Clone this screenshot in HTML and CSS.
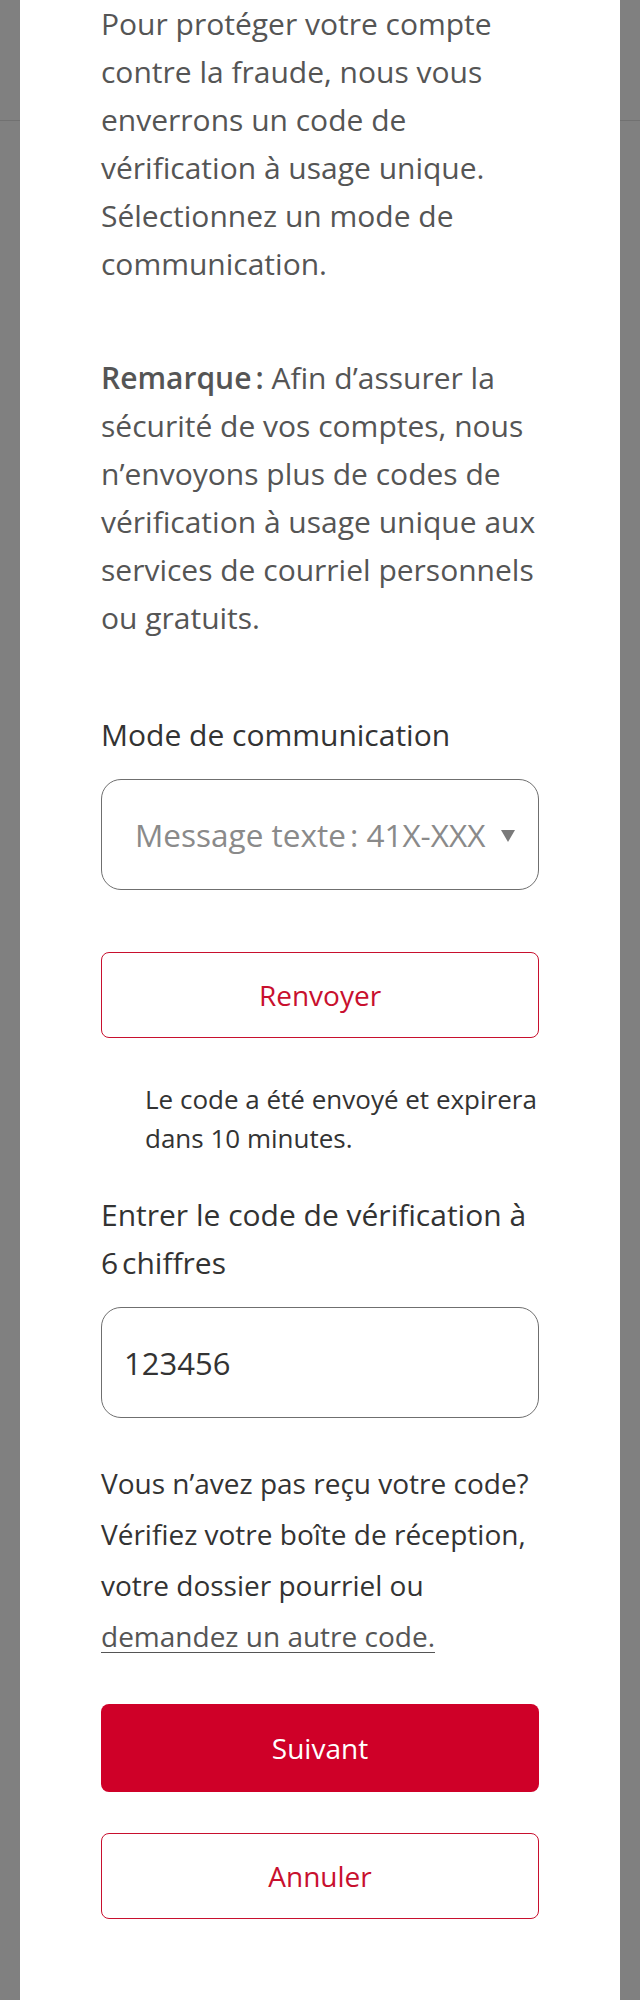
FILE: index.html
```html
<!DOCTYPE html>
<html lang="fr">
<head>
<meta charset="utf-8">
<title>Vérification</title>
<link rel="stylesheet" href="styles.css">
</head>
<body>
<main class="panel">
  <p class="intro">Pour protéger votre compte contre la fraude, nous vous enverrons un code de vérification à usage unique. Sélectionnez un mode de communication.</p>
  <p class="intro note"><strong class="note-title">Remarque<span class="colon">:</span></strong> Afin d’assurer la sécurité de vos comptes, nous n’envoyons plus de codes de vérification à usage unique aux services de courriel personnels ou gratuits.</p>
  <div class="field-label label-mode">Mode de communication</div>
  <div class="select">
    <span class="select-value">Message texte&#8239;: 41X-XXX-XXXX</span>
    <svg class="select-arrow" width="14" height="12" viewBox="0 0 14 12" aria-hidden="true"><path d="M0 0 H14 L7 12 Z" fill="#7a7a7a"/></svg>
  </div>
  <button class="btn btn-outline btn-resend" type="button">Renvoyer</button>
  <p class="sent">Le code a été envoyé et expirera dans 10 minutes.</p>
  <div class="field-label label-code">Entrer le code de vérification à 6&#8239;chiffres</div>
  <div class="input">123456</div>
  <p class="help">Vous n’avez pas reçu votre code?<br>Vérifiez votre boîte de réception,<br>votre dossier pourriel ou<br><a class="link" href="#">demandez un autre code.</a></p>
  <button class="btn btn-primary" type="button">Suivant</button>
  <button class="btn btn-outline btn-cancel" type="button">Annuler</button>
</main>
</body>
</html>
```
FILE: styles.css
```css
html, body {
  margin: 0;
  padding: 0;
}
body {
  background-color: #808080;
  background-image: linear-gradient(to bottom, transparent 120px, #717171 120px, #717171 121px, transparent 121px);
  font-family: "Open Sans", "DejaVu Sans", sans-serif;
}
.panel {
  box-sizing: border-box;
  width: 600px;
  min-height: 2000px;
  margin: 0 20px;
  padding: 0 81px;
  background: #ffffff;
  display: flex;
  flex-direction: column;
}
.intro {
  margin: 0;
  font-size: 30px;
  line-height: 48px;
  color: #555555;
}
.note {
  margin-top: 66px;
}
.note-title {
  font-weight: 600;
}
.colon {
  margin-left: 4px;
}
.field-label {
  font-size: 30px;
  line-height: 48px;
  color: #333333;
}
.label-mode {
  margin-top: 69px;
}
.label-code {
  margin-top: 33px;
}
.select, .input {
  box-sizing: border-box;
  height: 111px;
  margin-top: 20px;
  border: 1px solid #6f6f6f;
  border-radius: 20px;
  display: flex;
  align-items: center;
}
.select {
  padding: 0 23px 0 33px;
}
.select-value {
  flex: 1;
  min-width: 0;
  overflow: hidden;
  white-space: nowrap;
  font-size: 31.5px;
  color: #8a8a8a;
  margin-right: 15px;
}
.select-arrow {
  flex: none;
  margin-top: 3px;
}
.input {
  padding: 0 22px;
  font-size: 31px;
  color: #333333;
}
.btn {
  box-sizing: border-box;
  width: 100%;
  margin: 0;
  padding: 0;
  font-family: "Open Sans", "DejaVu Sans", sans-serif;
  font-size: 28px;
  border-radius: 8px;
  cursor: pointer;
}
.btn-outline {
  height: 86px;
  background: #ffffff;
  border: 1px solid #c8102e;
  color: #c8102e;
}
.btn-resend {
  margin-top: 62px;
}
.btn-primary {
  height: 88px;
  margin-top: 42px;
  background: #cf0028;
  border: none;
  color: #ffffff;
}
.btn-cancel {
  margin-top: 41px;
}
.sent {
  margin: 42px 0 0;
  padding-left: 44px;
  font-size: 26px;
  line-height: 39px;
  color: #333333;
}
.help {
  margin: 40px 0 0;
  font-size: 28px;
  line-height: 51px;
  color: #333333;
  white-space: nowrap;
}
.link {
  color: #555555;
  text-decoration: underline;
  text-decoration-thickness: 1px;
  text-underline-offset: 5px;
}
```
